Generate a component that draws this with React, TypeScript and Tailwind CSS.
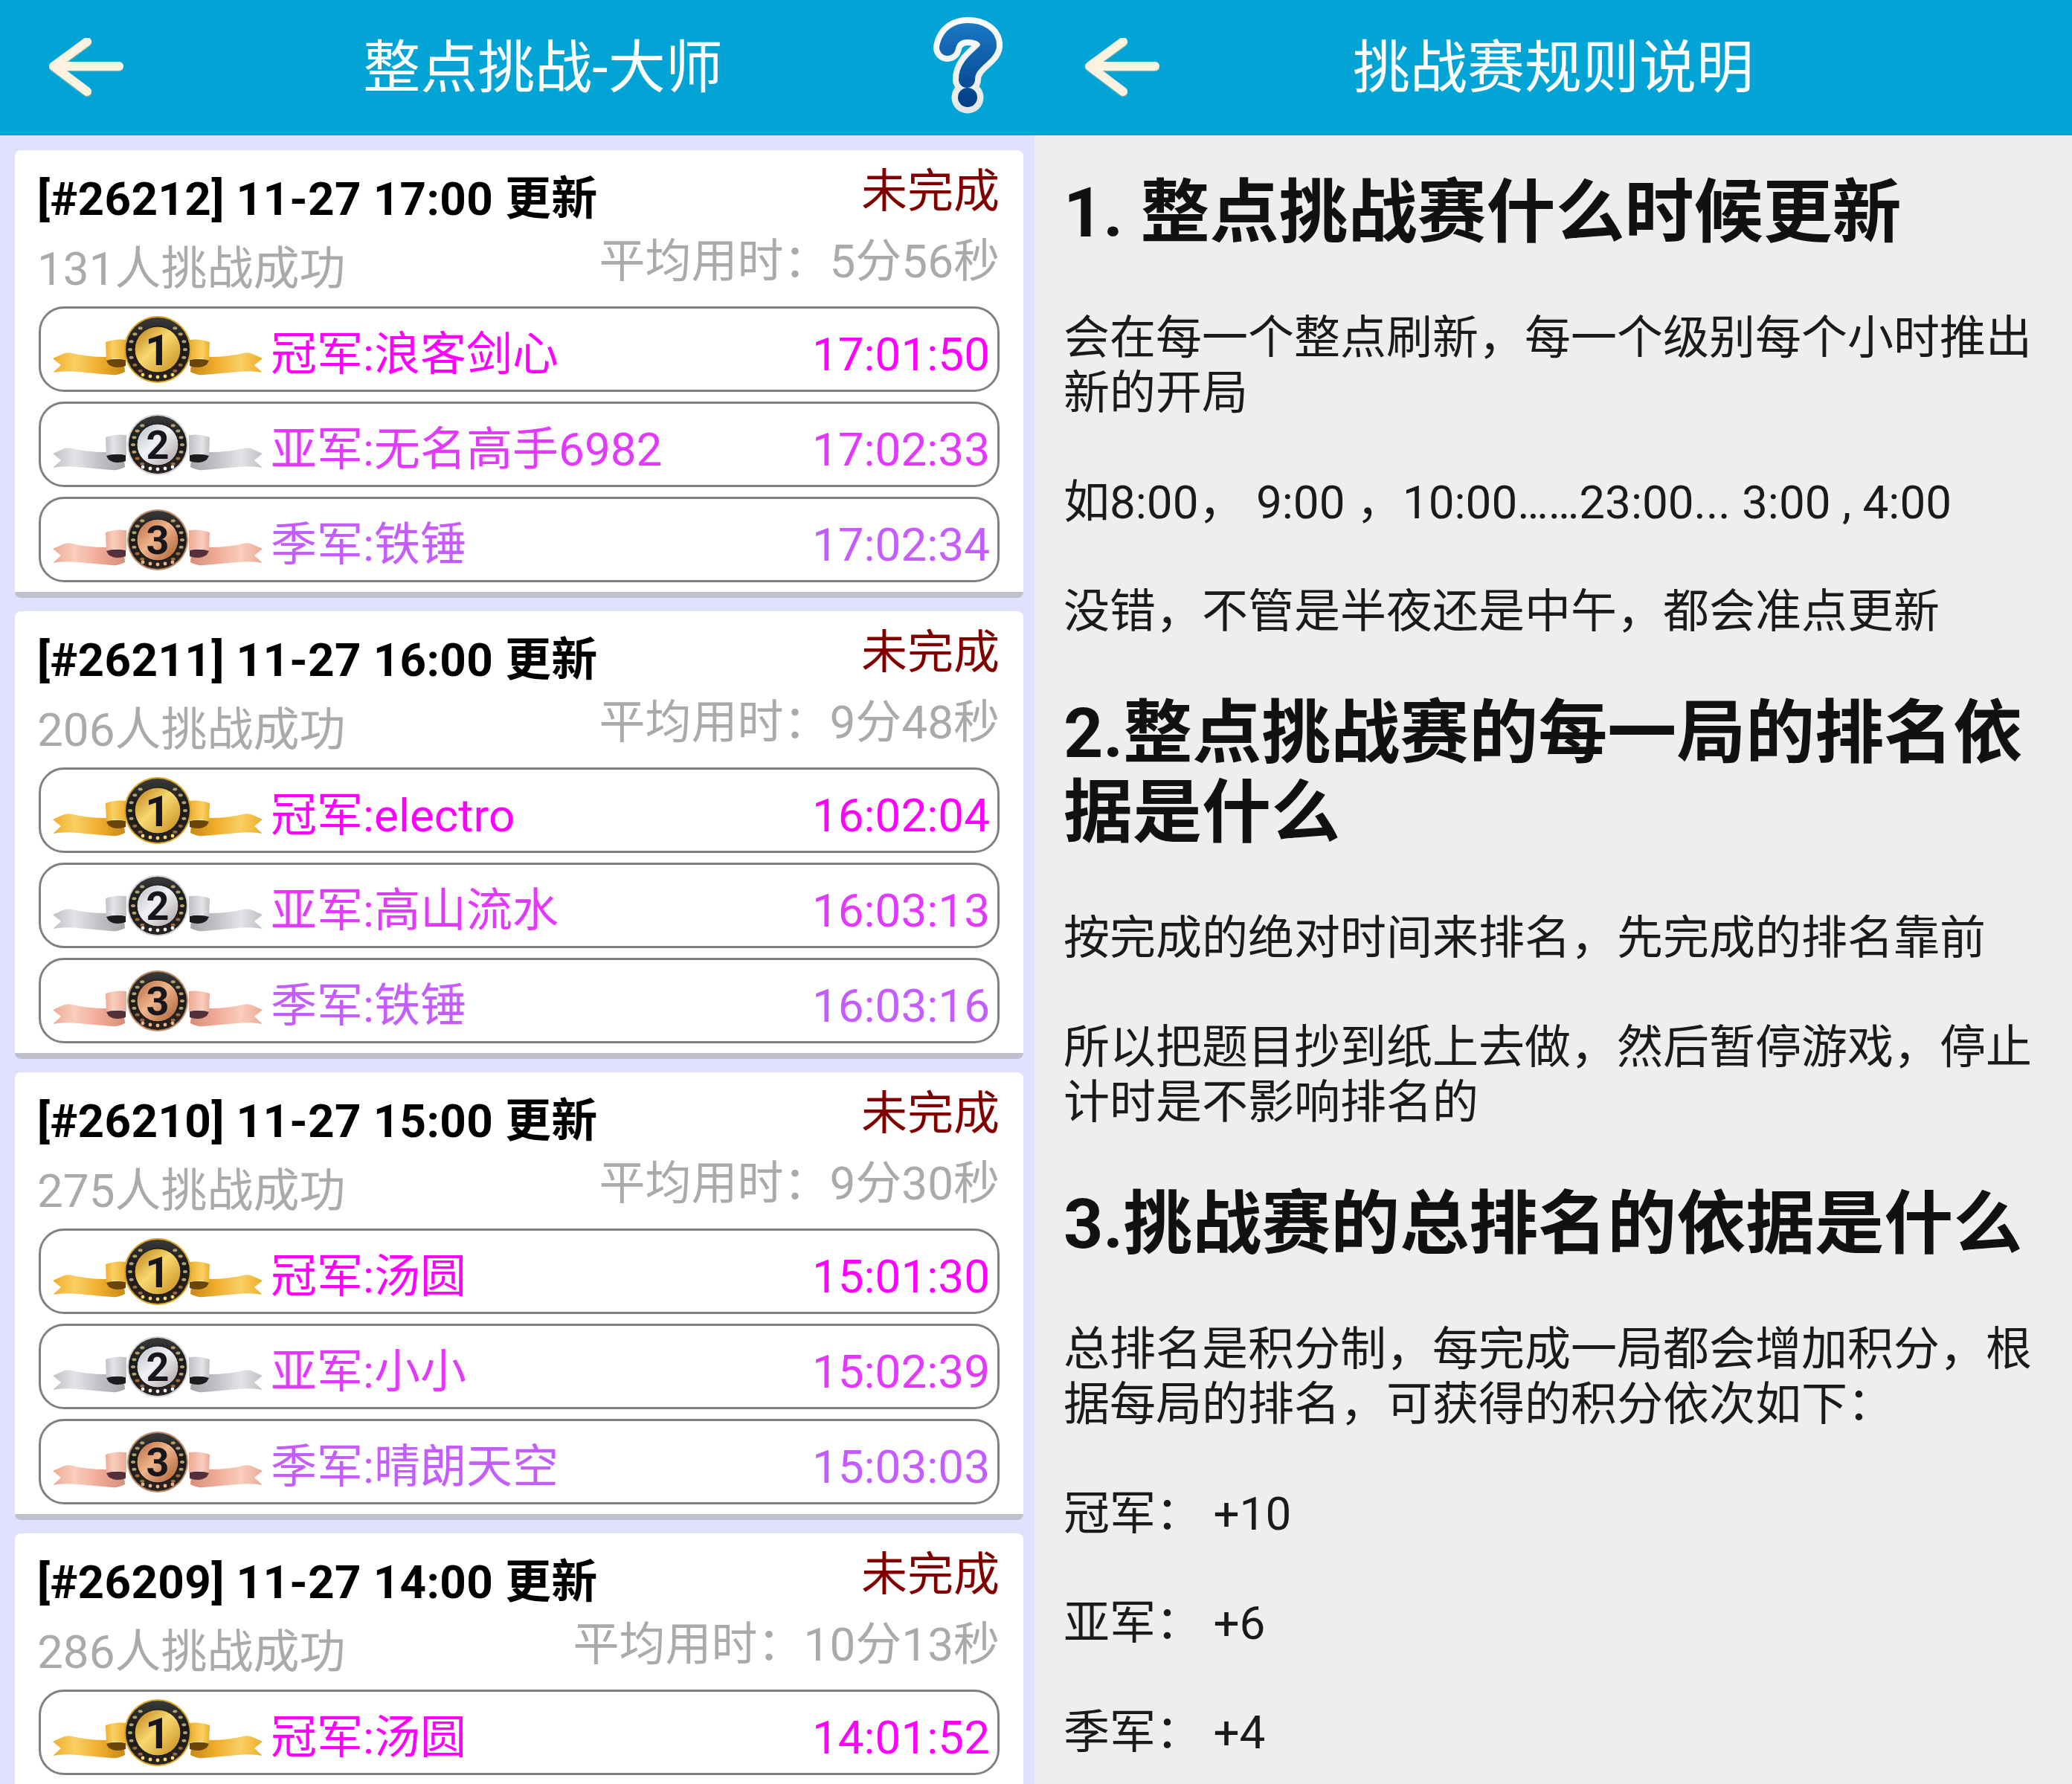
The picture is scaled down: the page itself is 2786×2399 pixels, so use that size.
import React from 'react';

type Rank = 1 | 2 | 3;

const medalThemes = {
  1: { id: 'gold', light: '#f9cf62', mid: '#eead2c', dark: '#c98a18', disc1: '#b97a10', disc2: '#f8d870', disc3: '#c48a18', fold: '#6b4608', edge: '#d9a526', r: 45, discR: 31, color: 'text-[#ff00ff]', label: '冠军' },
  2: { id: 'silver', light: '#e2e4e7', mid: '#bfc1c5', dark: '#a4a6aa', disc1: '#b8bcc2', disc2: '#f0f2f5', disc3: '#a89ea0', fold: '#1c1c1e', edge: '#d2d2d4', r: 41, discR: 28, color: 'text-[#e238ff]', label: '亚军' },
  3: { id: 'bronze', light: '#f9cdbd', mid: '#eeaa96', dark: '#d68e78', disc1: '#b5683a', disc2: '#eeb48c', disc3: '#a85c30', fold: '#54303a', edge: '#c08a68', r: 41, discR: 28, color: 'text-[#c45cff]', label: '季军' },
};

const Medal = ({ rank }: { rank: Rank }) => {
  const t = medalThemes[rank];
  const dots = [-2, -1, 0, 1, 2];
  const leaves = [-3, -2, -1, 0, 1, 2, 3];
  const ringR = t.r - 8;
  return (
    <svg width="284" height="92" viewBox="0 0 284 92" className="shrink-0">
      <defs>
        <linearGradient id={`${t.id}-tail`} x1="0" y1="0" x2="1" y2="0">
          <stop offset="0" stopColor={t.mid} />
          <stop offset="0.3" stopColor={t.light} />
          <stop offset="0.65" stopColor={t.mid} />
          <stop offset="1" stopColor={t.dark} />
        </linearGradient>
        <linearGradient id={`${t.id}-fold`} x1="0" y1="0" x2="1" y2="0">
          <stop offset="0" stopColor={t.mid} />
          <stop offset="0.35" stopColor={t.light} />
          <stop offset="1" stopColor={t.mid} />
        </linearGradient>
        <linearGradient id={`${t.id}-disc`} x1="0" y1="0" x2="1" y2="1">
          <stop offset="0" stopColor={t.disc1} />
          <stop offset="0.45" stopColor={t.disc2} />
          <stop offset="1" stopColor={t.disc3} />
        </linearGradient>
        <linearGradient id={`${t.id}-ring`} x1="0" y1="0" x2="0" y2="1">
          <stop offset="0" stopColor="#3a3a3a" />
          <stop offset="0.4" stopColor="#1a1a1a" />
          <stop offset="1" stopColor="#2a2420" />
        </linearGradient>
      </defs>
      {[0, 1].map((side) => (
        <g key={side} transform={side ? 'translate(282 0) scale(-1 1)' : undefined}>
          <path d="M0 58 L11 53 Q18 49 26 51 Q46 56 73 56 L96 66 L97 76 Q88 81 79 80 Q56 78 33 76 Q14 74 0 77 L11 67 Z" fill={`url(#${t.id}-tail)`} />
          <path d="M72 61 Q85 57 98 60 L98 68 Q84 73 75 66 Z" fill={t.fold} />
          <path d="M71 36 Q84 31 99 33 L99 60 Q84 56 72 60 Z" fill={`url(#${t.id}-fold)`} />
        </g>
      ))}
      <circle cx="141" cy="46" r={t.r} fill={t.edge} />
      <circle cx="141" cy="46" r={t.r - 2} fill={`url(#${t.id}-ring)`} />
      {[-1, 1].map((s) =>
        leaves.map((i) => (
          <ellipse
            key={`${s}${i}`}
            cx={141 + s * ringR * Math.cos((i * 17 * Math.PI) / 180)}
            cy={46 + ringR * Math.sin((i * 17 * Math.PI) / 180)}
            rx="3"
            ry="2"
            fill={i > 1 ? '#a06a40' : '#b0a070'}
          />
        )),
      )}
      {dots.map((i) => (
        <circle
          key={i}
          cx={141 + i * 10}
          cy={46 + t.r - 8 - (Math.abs(i) === 2 ? 3 : Math.abs(i) === 1 ? 1 : 0)}
          r="2.4"
          fill={t.disc2}
        />
      ))}
      <circle cx="141" cy="46" r={t.discR} fill={`url(#${t.id}-disc)`} stroke="#111" strokeWidth="1" />
      <text x="141" y={rank === 1 ? 67 : 65} textAnchor="middle" fontFamily="Roboto" fontWeight="700" fontSize={rank === 1 ? 58 : 54} fill="#16161c">
        {rank}
      </text>
    </svg>
  );
};

const QuestionIcon = () => (
  <svg width="94" height="130" viewBox="0 0 94 130" className="mb-[6px] shrink-0">
    <defs>
      <linearGradient id="q-blue" gradientUnits="userSpaceOnUse" x1="0" y1="8" x2="0" y2="122">
        <stop offset="0" stopColor="#1a78c4" />
        <stop offset="1" stopColor="#023c84" />
      </linearGradient>
      <linearGradient id="q-white" gradientUnits="userSpaceOnUse" x1="0" y1="0" x2="0" y2="130">
        <stop offset="0" stopColor="#ffffff" />
        <stop offset="1" stopColor="#e6e6e6" />
      </linearGradient>
    </defs>
    <path d="M19 41 C22 25 34 19 46 19 C63 19 75 27 74 39 C72 52 45 60 45 84" fill="none" stroke="url(#q-white)" strokeWidth="38" strokeLinecap="round" />
    <circle cx="46" cy="108" r="21.5" fill="url(#q-white)" />
    <path d="M19 41 C22 25 34 19 46 19 C63 19 75 27 74 39 C72 52 45 60 45 84" fill="none" stroke="url(#q-blue)" strokeWidth="22" strokeLinecap="round" />
    <circle cx="46" cy="108" r="13" fill="url(#q-blue)" />
  </svg>
);

const BackArrow = () => (
  <svg width="100" height="80" viewBox="0 0 100 80" className="shrink-0">
    <path d="M51 5 L6 38 L51 72 M8 38 L94 38" fill="none" stroke="#c9b48f" strokeWidth="13" strokeLinecap="round" strokeLinejoin="round" opacity="0.5" transform="translate(0 1)" />
    <path d="M51 5 L6 38 L51 72 M8 38 L94 38" fill="none" stroke="#fbf3e0" strokeWidth="12" strokeLinecap="round" strokeLinejoin="round" />
  </svg>
);

const rounds = [
  { no: 26212, time: '17:00', people: 131, avg: '5分56秒', rows: [['浪客剑心', '17:01:50'], ['无名高手6982', '17:02:33'], ['铁锤', '17:02:34']] },
  { no: 26211, time: '16:00', people: 206, avg: '9分48秒', rows: [['electro', '16:02:04'], ['高山流水', '16:03:13'], ['铁锤', '16:03:16']] },
  { no: 26210, time: '15:00', people: 275, avg: '9分30秒', rows: [['汤圆', '15:01:30'], ['小小', '15:02:39'], ['晴朗天空', '15:03:03']] },
  { no: 26209, time: '14:00', people: 286, avg: '10分13秒', rows: [['汤圆', '14:01:52']] },
];

const rules: { h?: string; p?: string }[] = [
  { h: '1. 整点挑战赛什么时候更新' },
  { p: '会在每一个整点刷新，每一个级别每个小时推出新的开局' },
  { p: '如8:00， 9:00 ，10:00……23:00... 3:00 , 4:00' },
  { p: '没错，不管是半夜还是中午，都会准点更新' },
  { h: '2.整点挑战赛的每一局的排名依据是什么' },
  { p: '按完成的绝对时间来排名，先完成的排名靠前' },
  { p: '所以把题目抄到纸上去做，然后暂停游戏，停止计时是不影响排名的' },
  { h: '3.挑战赛的总排名的依据是什么' },
  { p: '总排名是积分制，每完成一局都会增加积分，根据每局的排名，可获得的积分依次如下：' },
  { p: '冠军： +10' },
  { p: '亚军： +6' },
  { p: '季军： +4' },
];

const App: React.FC = () => {
  return (
    <div className="flex h-[2399px] w-[2786px] overflow-hidden font-['Roboto','Noto_Sans_CJK_SC',sans-serif] text-[62px]">
      {/* challenge list */}
      <div className="flex h-full w-[1391px] shrink-0 flex-col bg-[#e0e0ff]">
        <div className="flex h-[182px] shrink-0 items-center bg-[#02a4d5] pl-[66px] pr-[42px]">
          <BackArrow />
          <div className="flex-1 pl-[39px] pt-[3px] text-center text-[77px] leading-none text-white">整点挑战-大师</div>
          <QuestionIcon />
        </div>
        <div className="flex flex-col gap-[18px] pl-[20px] pr-[15px] pt-[20px]">
          {rounds.map((r) => (
            <div key={r.no} className="shrink-0 rounded-[8px] border-b-[8px] border-[#c0c0cc] bg-white pb-[13px] pl-[30px] pr-[32px]">
              <div className="flex h-[106px] justify-between">
                <div className="whitespace-nowrap pt-[26px] text-[62px] font-bold leading-[80px] tracking-[0.35px] text-black">
                  [#{r.no}] 11-27 {r.time} 更新
                </div>
                <div className="pt-[16px] leading-[80px] text-[#800000]">未完成</div>
              </div>
              <div className="flex h-[104px] justify-between text-[#aaaaaa]">
                <div className="pt-[14px] leading-[80px]">{r.people}人挑战成功</div>
                <div className="pt-[4px] leading-[80px]">平均用时：{r.avg}</div>
              </div>
              <div className="ml-[2px] flex flex-col gap-[13px]">
                {r.rows.map((row, i) => {
                  const rank = (i + 1) as Rank;
                  const t = medalThemes[rank];
                  return (
                    <div key={i} className={`flex h-[115px] items-center rounded-[34px] border-[3px] border-[#808080] pl-[16px] pr-[10px] ${t.color}`}>
                      <Medal rank={rank} />
                      <div className="ml-[9px] flex-1 pt-[14px] leading-none">
                        {t.label}:{row[0]}
                      </div>
                      <div className="pt-[14px] leading-none">{row[1]}</div>
                    </div>
                  );
                })}
              </div>
            </div>
          ))}
        </div>
      </div>

      {/* rules */}
      <div className="flex h-full flex-1 flex-col bg-[#eeeeee]">
        <div className="grid h-[182px] shrink-0 grid-cols-[1fr_auto_1fr] items-center bg-[#02a4d5] pl-[68px]">
          <BackArrow />
          <div className="-ml-[68px] pt-[3px] text-center text-[77px] leading-none text-white">挑战赛规则说明</div>
          <div />
        </div>
        <div className="pl-[39px] pr-[44px] pt-[51px] text-[#1a1a1a]">
          {rules.map((item, i) =>
            item.h ? (
              <h1 key={i} className="mb-[78px] mt-[73px] text-[93px] font-bold leading-[107px] text-[#111111] first:mt-0">
                {item.h}
              </h1>
            ) : (
              <p key={i} className="mb-[73px] leading-[74px]">
                {item.p}
              </p>
            ),
          )}
        </div>
      </div>
    </div>
  );
};

export default App;
